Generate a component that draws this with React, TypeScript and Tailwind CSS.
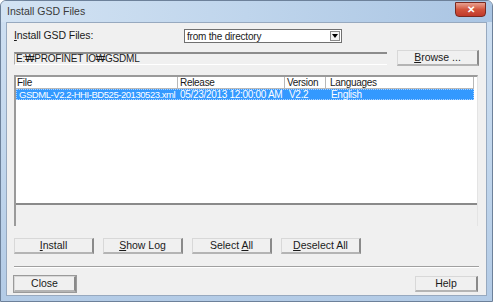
import React from "react";

const FONT = { fontFamily: '"Liberation Sans", Arial, sans-serif' };

function Btn({ label, u, w, focused }: { label: string; u?: number; w: string; focused?: boolean }) {
  const idx = u ?? -1;
  return (
    <button
      className={`${w} h-[16px] flex items-center justify-center text-[10.5px] text-[#1a1a1a] bg-[#f0f0f0] border-t border-l border-t-[#d8d8d8] border-l-[#d8d8d8] border-r-2 border-b-2 border-r-[#8a8a8a] border-b-[#b4b4b4] ${
        focused ? "outline outline-1 outline-[#9a9a9a]" : ""
      }`}
    >
      {idx >= 0 ? (
        <span>
          {label.slice(0, idx)}
          <span className="underline">{label[idx]}</span>
          {label.slice(idx + 1)}
        </span>
      ) : (
        label
      )}
    </button>
  );
}

export default function App() {
  return (
    <div
      className="w-[493px] h-[302px] flex flex-col bg-gradient-to-b from-[#cfe0f2] via-[#c2d7ed] to-[#b3cbe6] border border-[#6d819a] rounded-t-[6px] overflow-hidden"
      style={FONT}
    >
      {/* title bar */}
      <div className="h-[21px] flex items-center justify-between pl-[6px] pr-[6px] shrink-0 bg-gradient-to-r from-[#d3e3f3] via-[#bfd5ec] to-[#aac5e3]">
        <span className="text-[10.5px] text-[#3a3a3a]">Install GSD Files</span>
        <div className="w-[31px] h-[15px] -mt-[5px] rounded-b-[4px] bg-gradient-to-b from-[#e8a090] via-[#d2543c] to-[#c0392b] border border-[#7a2a20] flex items-center justify-center text-white text-[10px] font-bold">
          ✕
        </div>
      </div>

      {/* client area */}
      <div className="flex-1 mx-[5px] mb-[5px] bg-[#f0f0f0] border border-[#97a9bf] flex flex-col px-[7px] text-[10.5px] text-[#1a1a1a]">
        <div className="flex items-center mt-[6px] h-[14px]">
          <span className="w-[170px] tracking-[-0.1px]">
            <span className="underline">I</span>nstall GSD Files:
          </span>
          <div className="w-[158px] h-[14px] bg-white border border-[#707070] flex items-center justify-between pl-[2px] pr-[1px]">
            <span className="text-[10px] tracking-[-0.2px]">from the directory</span>
            <div className="w-[10px] h-[10px] border border-[#8a8a8a] bg-[#f4f4f4] flex items-center justify-center">
              <svg width="6" height="4" viewBox="0 0 6 4">
                <path d="M0 0h6L3 4z" fill="#000" />
              </svg>
            </div>
          </div>
        </div>

        <div className="flex items-center mt-[7px] h-[16px]">
          <div className="w-[374px] h-[13px] border-t-2 border-t-[#8c8c8c] border-b border-b-[#ffffff] border-l border-l-[#b0b0b0] flex items-center pl-[1px] bg-[#f0f0f0] text-[10px] tracking-[-0.2px]">
            E:₩PROFINET IO₩GSDML
          </div>
          <div className="ml-[10px]">
            <Btn label="Browse ..." u={0} w="w-[82px]" />
          </div>
        </div>

        {/* list + status area */}
        <div className="mt-[9px] w-[464px] h-[151px] border-l-2 border-t-2 border-l-[#9a9a9a] border-t-[#9a9a9a] border-r border-r-[#e4e4e4] flex flex-col">
          <div className="h-[128px] bg-white border-b-2 border-b-[#8a8a8a] flex flex-col text-[10px] tracking-[-0.3px]">
            <div className="flex h-[12px] leading-[12px] bg-white">
              <div className="w-[162px] pl-[1px] border-r border-b border-[#b8b8b8]">File</div>
              <div className="w-[107px] pl-[2px] border-r border-b border-[#b8b8b8]">Release</div>
              <div className="w-[41px] pl-[2px] border-r border-b border-[#b8b8b8]">Version</div>
              <div className="flex-1 pl-[4px] border-r border-b border-[#b8b8b8] mr-[3px]">Languages</div>
            </div>
            <div className="flex h-[11px] leading-[10px] bg-[#3399ff] text-white mr-[3px] border border-dotted border-[#a8d0ff]">
              <div className="w-[162px] pl-[2px] whitespace-nowrap text-[9.5px] tracking-[-0.45px]">GSDML-V2.2-HHI-BD525-20130523.xml</div>
              <div className="w-[107px] pl-[1px] whitespace-nowrap">05/23/2013 12:00:00 AM</div>
              <div className="w-[41px] pl-[3px]">V2.2</div>
              <div className="flex-1 pl-[4px]">English</div>
            </div>
          </div>
          <div className="flex-1 bg-[#f0f0f0]" />
        </div>

        <div className="flex gap-[9px] mt-[12px]">
          <Btn label="Install" u={0} w="w-[80px]" />
          <Btn label="Show Log" u={0} w="w-[80px]" />
          <Btn label="Select All" u={7} w="w-[80px]" />
          <Btn label="Deselect All" u={0} w="w-[80px]" />
        </div>

        <div className="mt-[12px] w-[465px] border-t border-t-[#a0a0a0] border-b border-b-white" />

        <div className="flex justify-between mt-[8px] pr-[1px]">
          <Btn label="Close" w="w-[62px]" focused />
          <Btn label="Help" w="w-[63px]" />
        </div>
      </div>
    </div>
  );
}
